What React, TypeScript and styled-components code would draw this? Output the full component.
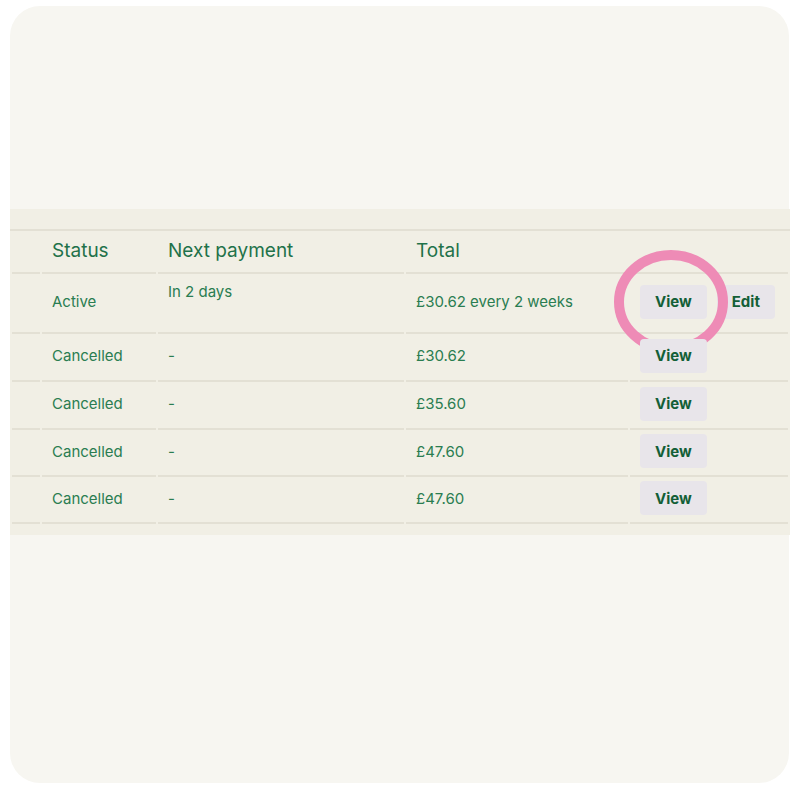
import React from 'react';
import styled, {createGlobalStyle} from 'styled-components';

const GlobalStyle = createGlobalStyle`
  body {
    margin: 0;
    background: #fff;
    font-family: Inter, "Liberation Sans", sans-serif;
  }
`

const Card = styled.div`
  margin: 6px 0 0 10px;
  width: 779px;
  height: 777px;
  background: #f7f6f1;
  border-radius: 30px;
  padding-top: 203px;
  box-sizing: border-box;
`

const Band = styled.div`
  width: 780px;
  background: #f1efe5;
  padding: 20px 0 11px;
`

const Table = styled.table`
  width: 100%;
  table-layout: fixed;
  border-collapse: separate;
  border-spacing: 2px 0;
  border-top: 2px solid #e3e0d4;
  color: #2a7d51;
  font-size: 15px;
`

const Th = styled.th<{ $w?: number }>`
  text-align: left;
  font-weight: 400;
  font-size: 19px;
  color: #1f724a;
  height: 43px;
  padding: 0 10px 2px;
  border-bottom: 2px solid #e3e0d4;
  width: ${p => (p.$w ? p.$w + 'px' : 'auto')};
  box-sizing: border-box;
`

const Td = styled.td<{ $top?: boolean; $h?: number }>`
  padding: ${p => (p.$top ? '8px 10px 0' : '0 10px 3px')};
  vertical-align: ${p => (p.$top ? 'top' : 'middle')};
  height: ${p => p.$h ?? 47}px;
  border-bottom: 2px solid #e3e0d4;
  box-sizing: border-box;
`

const Actions = styled.div`
  position: relative;
  display: flex;
  gap: 10px;
`

const Button = styled.button`
  height: 34px;
  padding: 0 15px;
  border: none;
  border-radius: 4px;
  background: #e8e5ea;
  color: #135f37;
  font-family: Inter, "Liberation Sans", sans-serif;
  font-weight: 700;
  font-size: 15px;
`

const Ring = styled.svg`
  position: absolute;
  left: -27px;
  top: -36px;
  pointer-events: none;
`

type Row = { status: string; next: string; total: string; edit?: boolean }

const rows: Row[] = [
  {status: 'Active', next: 'In 2 days', total: '£30.62 every 2 weeks', edit: true},
  {status: 'Cancelled', next: '-', total: '£30.62'},
  {status: 'Cancelled', next: '-', total: '£35.60'},
  {status: 'Cancelled', next: '-', total: '£47.60'},
  {status: 'Cancelled', next: '-', total: '£47.60'},
]

const rowHeight = [60, 48, 48, 47, 47]

export default function App() {
  return <>
    <GlobalStyle/>
    <Card>
      <Band>
        <Table>
          <thead>
            <tr>
              <Th $w={28}></Th>
              <Th $w={114}>Status</Th>
              <Th $w={246}>Next payment</Th>
              <Th $w={222}>Total</Th>
              <Th></Th>
            </tr>
          </thead>
          <tbody>
            {rows.map((r, i) => (
              <tr key={i}>
                <Td $h={rowHeight[i]}></Td>
                <Td $h={rowHeight[i]}>{r.status}</Td>
                <Td $h={rowHeight[i]} $top={i === 0}>{r.next}</Td>
                <Td $h={rowHeight[i]}>{r.total}</Td>
                <Td $h={rowHeight[i]}>
                  <Actions>
                    <Button>View</Button>
                    {r.edit && <Button>Edit</Button>}
                    {i === 0 && (
                      <Ring width="116" height="106" viewBox="0 0 116 106">
                        <ellipse cx="58" cy="53" rx="52" ry="47" fill="none" stroke="#ee8bb6" strokeWidth="10"/>
                      </Ring>
                    )}
                  </Actions>
                </Td>
              </tr>
            ))}
          </tbody>
        </Table>
      </Band>
    </Card>
  </>
}
